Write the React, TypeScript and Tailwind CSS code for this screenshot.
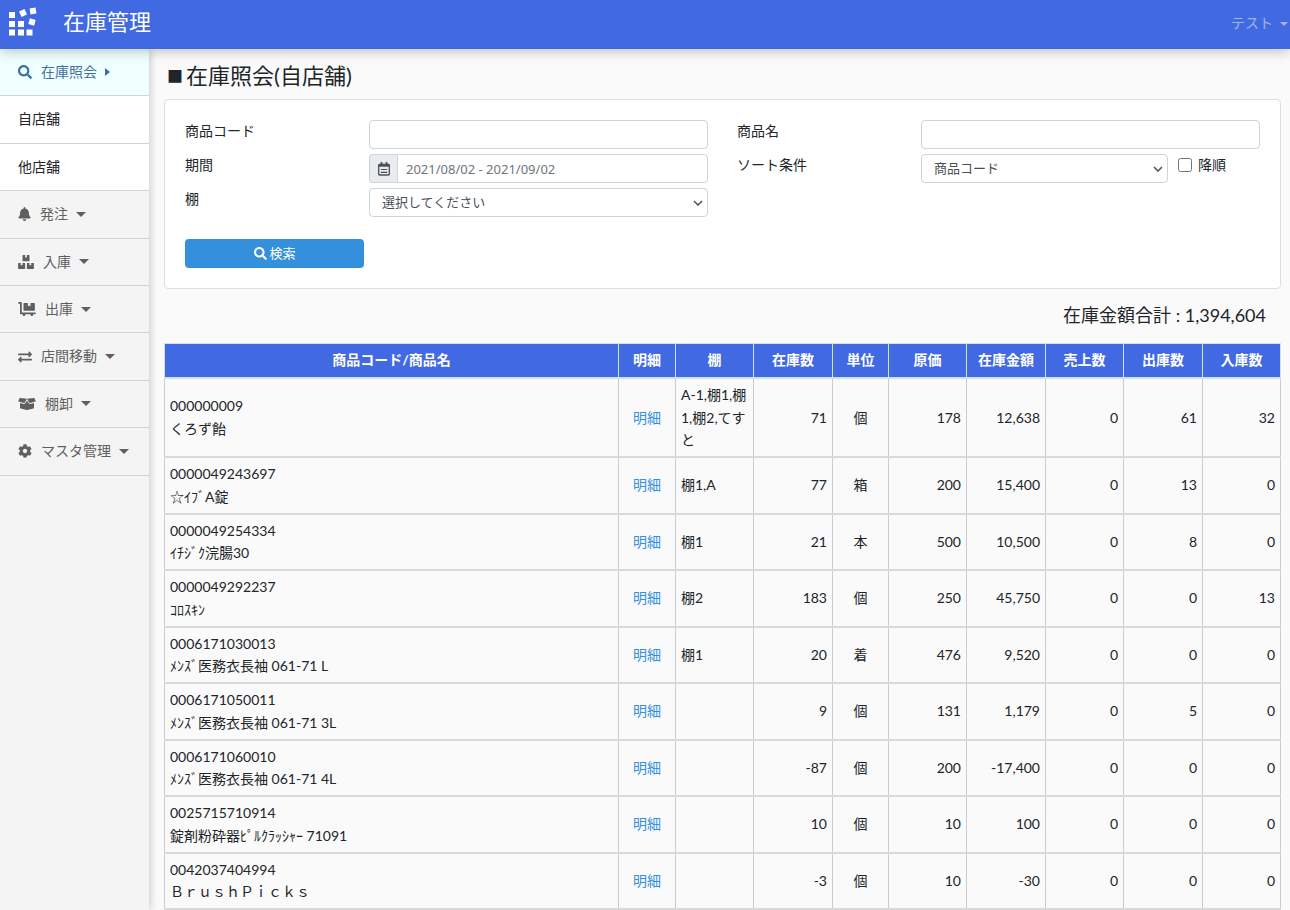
import { useState } from "react";
import type { ReactNode } from "react";
import {
  FaBell,
  FaBoxes,
  FaBoxOpen,
  FaCog,
  FaDollyFlatbed,
  FaExchangeAlt,
  FaSearch,
} from "react-icons/fa";

const menuItems = [
  { label: "発注", icon: FaBell, iconClass: "w-[13px] h-3.5" },
  { label: "入庫", icon: FaBoxes, iconClass: "w-4 h-3.5" },
  { label: "出庫", icon: FaDollyFlatbed, iconClass: "w-[18px] h-3.5" },
  { label: "店間移動", icon: FaExchangeAlt, iconClass: "size-3.5" },
  { label: "棚卸", icon: FaBoxOpen, iconClass: "w-[18px] h-3.5" },
  { label: "マスタ管理", icon: FaCog, iconClass: "size-3.5" },
];

const columns = [
  { label: "商品コード/商品名", width: "" },
  { label: "明細", width: "w-[57px]" },
  { label: "棚", width: "w-[78px]" },
  { label: "在庫数", width: "w-[79px]" },
  { label: "単位", width: "w-[56px]" },
  { label: "原価", width: "w-[78px]" },
  { label: "在庫金額", width: "w-[79px]" },
  { label: "売上数", width: "w-[78px]" },
  { label: "出庫数", width: "w-[79px]" },
  { label: "入庫数", width: "w-[78px]" },
];

interface Stock {
  code: string;
  name: string;
  shelf: string;
  quantity: string;
  unit: string;
  cost: string;
  amount: string;
  sold: string;
  shipped: string;
  received: string;
}

const stocks: Stock[] = [
  { code: "000000009", name: "くろず飴", shelf: "A-1,棚1,棚1,棚2,てすと", quantity: "71", unit: "個", cost: "178", amount: "12,638", sold: "0", shipped: "61", received: "32" },
  { code: "0000049243697", name: "☆ｲﾌﾞA錠", shelf: "棚1,A", quantity: "77", unit: "箱", cost: "200", amount: "15,400", sold: "0", shipped: "13", received: "0" },
  { code: "0000049254334", name: "ｲﾁｼﾞｸ浣腸30", shelf: "棚1", quantity: "21", unit: "本", cost: "500", amount: "10,500", sold: "0", shipped: "8", received: "0" },
  { code: "0000049292237", name: "ｺﾛｽｷﾝ", shelf: "棚2", quantity: "183", unit: "個", cost: "250", amount: "45,750", sold: "0", shipped: "0", received: "13" },
  { code: "0006171030013", name: "ﾒﾝｽﾞ医務衣長袖 061-71 L", shelf: "棚1", quantity: "20", unit: "着", cost: "476", amount: "9,520", sold: "0", shipped: "0", received: "0" },
  { code: "0006171050011", name: "ﾒﾝｽﾞ医務衣長袖 061-71 3L", shelf: "", quantity: "9", unit: "個", cost: "131", amount: "1,179", sold: "0", shipped: "5", received: "0" },
  { code: "0006171060010", name: "ﾒﾝｽﾞ医務衣長袖 061-71 4L", shelf: "", quantity: "-87", unit: "個", cost: "200", amount: "-17,400", sold: "0", shipped: "0", received: "0" },
  { code: "0025715710914", name: "錠剤粉砕器ﾋﾟﾙｸﾗｯｼｬｰ 71091", shelf: "", quantity: "10", unit: "個", cost: "10", amount: "100", sold: "0", shipped: "0", received: "0" },
  { code: "0042037404994", name: "ＢｒｕｓｈＰｉｃｋｓ", shelf: "", quantity: "-3", unit: "個", cost: "10", amount: "-30", sold: "0", shipped: "0", received: "0" },
];

const controlClass =
  "h-[29px] w-full min-w-0 rounded-sm border border-[#ced4da] bg-white text-[13px] text-[#495057]";

export default function App() {
  return (
    <div className="flex h-screen flex-col overflow-hidden bg-[#fafafa] font-['Lato','Noto_Sans_CJK_JP',sans-serif] text-sm leading-relaxed text-[#212529]">
      <Header />
      <div className="flex min-h-0 flex-1">
        <Sidebar />
        <main className="min-w-0 flex-1 overflow-hidden pt-[11px] pr-[9px] pl-[15px]">
          <h1 className="mb-[7px] flex items-center text-[22px] leading-8">
            <span className="px-[3px] text-base">■</span>
            在庫照会(自店舗)
          </h1>
          <SearchForm />
          <p className="mt-[13px] mb-3.5 pr-[15px] text-right text-lg leading-[27px]">
            在庫金額合計 : 1,394,604
          </p>
          <StockTable />
        </main>
      </div>
    </div>
  );
}

function Header() {
  return (
    <header className="z-10 flex h-[49px] shrink-0 items-center bg-[#4169e1] pr-0.5 pl-2 text-white shadow-[0_2px_12px_rgba(0,0,0,0.25)]">
      <Logo />
      <a href="#" className="ml-[25px] pb-1.5 text-[22px] leading-8">
        在庫管理
      </a>
      <button
        type="button"
        className="ml-auto flex items-center gap-[7px] pb-0.5 text-white/50"
      >
        テスト
        <Caret />
      </button>
    </header>
  );
}

function Logo() {
  return (
    <svg viewBox="0 0 30 30" className="mb-1.5 size-[30px]" fill="currentColor" aria-hidden="true">
      <rect x="1" y="5" width="6" height="6" />
      <rect x="1" y="14" width="6" height="6" />
      <rect x="1" y="22.5" width="6" height="6" />
      <rect x="10" y="14" width="6" height="6" />
      <rect x="10" y="22.5" width="6" height="6" />
      <rect x="18.5" y="22.5" width="6" height="6" />
      <rect x="12" y="3" width="6" height="6" transform="rotate(-25 15 6)" />
      <rect x="21" y="12" width="6" height="6" transform="rotate(15 24 15)" />
      <rect x="22" y="1" width="6" height="6" transform="rotate(-8 25 4)" />
    </svg>
  );
}

function Caret() {
  return (
    <span className="border-x-4 border-t-4 border-x-transparent border-t-current" />
  );
}

function Sidebar() {
  return (
    <nav className="w-[149px] shrink-0 bg-[#f4f4f4] leading-[1.6] shadow-[1px_0_8px_rgba(0,0,0,0.2)]">
      <button
        type="button"
        className="flex w-full items-center border-b border-[#d3d3d3] bg-[#f0ffff] px-[18px] py-3 text-[#3d719f]"
      >
        <FaSearch className="mr-[9px] size-3.5" />
        在庫照会
        <span className="ml-2 border-y-4 border-l-[5px] border-y-transparent border-l-current" />
      </button>
      <SubLink>自店舗</SubLink>
      <SubLink>他店舗</SubLink>
      {menuItems.map(({ label, icon: Icon, iconClass }) => (
        <button
          key={label}
          type="button"
          className="flex w-full items-center border-b border-[#d3d3d3] px-[18px] py-3 text-[#5f5f5f]"
        >
          <Icon className={`mr-[9px] ${iconClass}`} />
          {label}
          <span className="ml-2 border-x-[5px] border-t-[5px] border-x-transparent border-t-current" />
        </button>
      ))}
    </nav>
  );
}

function SubLink({ children }: { children: ReactNode }) {
  return (
    <a
      href="#"
      className="block border-b border-[#d3d3d3] bg-white px-[18px] py-3"
    >
      {children}
    </a>
  );
}

function SearchForm() {
  const [code, setCode] = useState("");
  const [name, setName] = useState("");
  const [descending, setDescending] = useState(false);

  return (
    <form
      onSubmit={(e) => e.preventDefault()}
      className="rounded-sm border border-[#dfdfdf] bg-white p-5"
    >
      <div className="grid grid-cols-2 gap-x-[29px] gap-y-[5px]">
        <Field id="code" label="商品コード">
          <input
            id="code"
            value={code}
            onChange={(e) => setCode(e.target.value)}
            className={`${controlClass} px-2`}
          />
        </Field>
        <Field id="name" label="商品名">
          <input
            id="name"
            value={name}
            onChange={(e) => setName(e.target.value)}
            className={`${controlClass} px-2`}
          />
        </Field>
        <Field id="period" label="期間">
          <span className="flex h-[29px] w-7 shrink-0 items-center justify-center rounded-l-sm border border-r-0 border-[#ced4da] bg-[#e9ecef] text-[#495057]">
            <CalendarIcon />
          </span>
          <input
            id="period"
            placeholder="2021/08/02 - 2021/09/02"
            className={`${controlClass} rounded-l-none px-2 font-['Noto_Sans',sans-serif] placeholder:text-[#6c757d]`}
          />
        </Field>
        <Field id="sort" label="ソート条件">
          <SelectBox id="sort" option="商品コード" />
          <label className="ml-2.5 flex w-[82px] shrink-0 items-center gap-1.5 self-start">
            <input
              type="checkbox"
              checked={descending}
              onChange={(e) => setDescending(e.target.checked)}
              className="size-3.5"
            />
            降順
          </label>
        </Field>
        <Field id="shelf" label="棚">
          <SelectBox id="shelf" option="選択してください" />
        </Field>
      </div>
      <button
        type="submit"
        className="mt-[22px] flex h-[29px] w-1/6 items-center justify-center gap-[3px] rounded-sm bg-[#3490dc] text-[13px] text-white"
      >
        <FaSearch className="size-[13px]" />
        検索
      </button>
    </form>
  );
}

function CalendarIcon() {
  return (
    <svg viewBox="0 0 14 14" className="size-3.5" fill="none" stroke="currentColor" aria-hidden="true">
      <path d="M4.5 0v3M9.5 0v3" strokeWidth="1.8" />
      <rect x="1.7" y="2.5" width="10.6" height="10.5" rx="0.8" strokeWidth="1.3" />
      <path d="M1.5 3.8h11" strokeWidth="1.8" />
      <path d="M3.8 7.5h6.4M3.8 10.3h6.4" strokeWidth="1.2" />
    </svg>
  );
}

interface FieldProps {
  id: string;
  label: string;
  children: ReactNode;
}

function Field({ id, label, children }: FieldProps) {
  return (
    <div className="flex">
      <label htmlFor={id} className="w-[184px] shrink-0">
        {label}
      </label>
      <div className="flex min-w-0 flex-1 items-center">{children}</div>
    </div>
  );
}

function SelectBox({ id, option }: { id: string; option: string }) {
  return (
    <div className="relative min-w-0 flex-1">
      <select
        id={id}
        className={`${controlClass} block appearance-none px-3`}
      >
        <option>{option}</option>
      </select>
      <svg
        viewBox="0 0 10 6"
        className="pointer-events-none absolute top-3 right-[5px] h-1.5 w-2.5"
        fill="none"
        stroke="#555"
        strokeWidth="1.6"
        aria-hidden="true"
      >
        <path d="M1 1l4 4 4-4" />
      </svg>
    </div>
  );
}

function StockTable() {
  return (
    <table className="w-full table-fixed border-collapse">
      <thead>
        <tr className="bg-[#4169e1] text-white">
          {columns.map((column) => (
            <th
              key={column.label}
              className={`border-x border-t border-b-2 border-[#d0e2ee] py-[5px] font-bold whitespace-nowrap ${column.width}`}
            >
              {column.label}
            </th>
          ))}
        </tr>
      </thead>
      <tbody>
        {stocks.map((stock) => (
          <StockRow key={stock.code} stock={stock} />
        ))}
      </tbody>
    </table>
  );
}

function StockRow({ stock }: { stock: Stock }) {
  return (
    <tr className="[&>td]:border-x [&>td]:border-b-2 [&>td]:border-x-[#ccc] [&>td]:border-b-[#d9d9d9] [&>td]:px-[5px] [&>td]:pt-[5px] [&>td]:pb-1">
      <td>
        {stock.code}
        <br />
        {stock.name}
      </td>
      <td className="text-center">
        <a href="#" className="text-[#3490dc]">
          明細
        </a>
      </td>
      <td className="break-all">{stock.shelf}</td>
      <td className="text-right">{stock.quantity}</td>
      <td className="text-center">{stock.unit}</td>
      <td className="text-right">{stock.cost}</td>
      <td className="text-right">{stock.amount}</td>
      <td className="text-right">{stock.sold}</td>
      <td className="text-right">{stock.shipped}</td>
      <td className="text-right">{stock.received}</td>
    </tr>
  );
}
